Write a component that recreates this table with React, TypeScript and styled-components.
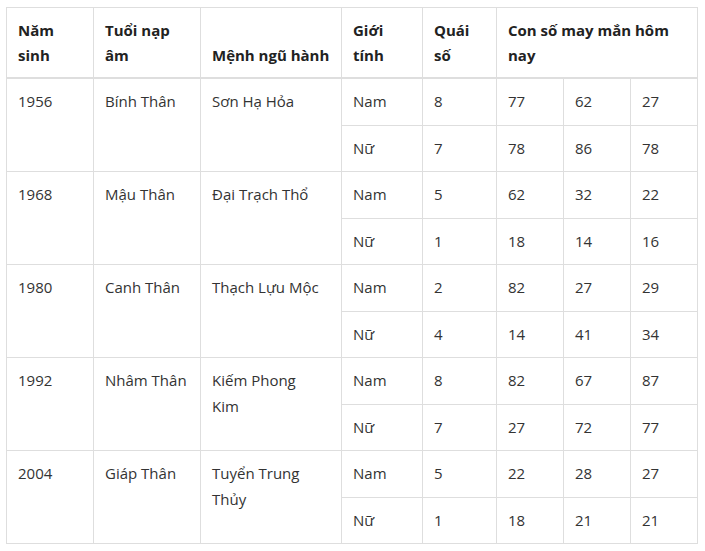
import React from 'react';
import styled, { createGlobalStyle } from 'styled-components';

const GlobalStyle = createGlobalStyle`
  html, body {
    margin: 0;
    padding: 0;
    background: #ffffff;
  }
  body {
    font-family: "Open Sans", "Noto Sans", sans-serif;
    color: #333333;
  }
`;

const Wrapper = styled.div`
  padding: 7px 8px 0 6px;
`;

const Table = styled.table`
  width: 691px;
  border-collapse: collapse;
  table-layout: fixed;
  font-size: 15px;
`;

const HeadCell = styled.th`
  border: 1px solid #dedede;
  border-bottom: 2px solid #dedede;
  padding: 10px 11px 9px;
  line-height: 25px;
  text-align: left;
  vertical-align: bottom;
  font-weight: 700;
  color: #222222;
`;

const Cell = styled.td<{ $padRight?: number }>`
  border: 1px solid #dedede;
  padding: 10px ${(p) => p.$padRight ?? 11}px 10px 11px;
  line-height: 25.5px;
  text-align: left;
  vertical-align: top;
  color: #333333;
`;

type Row = {
  year: string;
  napAm: string;
  menh: string;
  nam: { quai: string; nums: string[] };
  nu: { quai: string; nums: string[] };
};

const rows: Row[] = [
  { year: '1956', napAm: 'Bính Thân', menh: 'Sơn Hạ Hỏa', nam: { quai: '8', nums: ['77', '62', '27'] }, nu: { quai: '7', nums: ['78', '86', '78'] } },
  { year: '1968', napAm: 'Mậu Thân', menh: 'Đại Trạch Thổ', nam: { quai: '5', nums: ['62', '32', '22'] }, nu: { quai: '1', nums: ['18', '14', '16'] } },
  { year: '1980', napAm: 'Canh Thân', menh: 'Thạch Lựu Mộc', nam: { quai: '2', nums: ['82', '27', '29'] }, nu: { quai: '4', nums: ['14', '41', '34'] } },
  { year: '1992', napAm: 'Nhâm Thân', menh: 'Kiếm Phong Kim', nam: { quai: '8', nums: ['82', '67', '87'] }, nu: { quai: '7', nums: ['27', '72', '77'] } },
  { year: '2004', napAm: 'Giáp Thân', menh: 'Tuyển Trung Thủy', nam: { quai: '5', nums: ['22', '28', '27'] }, nu: { quai: '1', nums: ['18', '21', '21'] } },
];

const App: React.FC = () => {
  return (
    <>
      <GlobalStyle />
      <Wrapper>
        <Table>
          <colgroup>
            <col style={{ width: 87 }} />
            <col style={{ width: 107 }} />
            <col style={{ width: 141 }} />
            <col style={{ width: 81 }} />
            <col style={{ width: 74 }} />
            <col style={{ width: 67 }} />
            <col style={{ width: 67 }} />
            <col style={{ width: 67 }} />
          </colgroup>
          <thead>
            <tr>
              <HeadCell>Năm sinh</HeadCell>
              <HeadCell>Tuổi nạp âm</HeadCell>
              <HeadCell>Mệnh ngũ hành</HeadCell>
              <HeadCell>Giới tính</HeadCell>
              <HeadCell>Quái số</HeadCell>
              <HeadCell colSpan={3}>Con số may mắn hôm nay</HeadCell>
            </tr>
          </thead>
          <tbody>
            {rows.map((r) => (
              <React.Fragment key={r.year}>
                <tr>
                  <Cell rowSpan={2}>{r.year}</Cell>
                  <Cell rowSpan={2}>{r.napAm}</Cell>
                  <Cell rowSpan={2} $padRight={16}>{r.menh}</Cell>
                  <Cell>Nam</Cell>
                  <Cell>{r.nam.quai}</Cell>
                  {r.nam.nums.map((n, i) => (
                    <Cell key={i}>{n}</Cell>
                  ))}
                </tr>
                <tr>
                  <Cell>Nữ</Cell>
                  <Cell>{r.nu.quai}</Cell>
                  {r.nu.nums.map((n, i) => (
                    <Cell key={i}>{n}</Cell>
                  ))}
                </tr>
              </React.Fragment>
            ))}
          </tbody>
        </Table>
      </Wrapper>
    </>
  );
};

export default App;
